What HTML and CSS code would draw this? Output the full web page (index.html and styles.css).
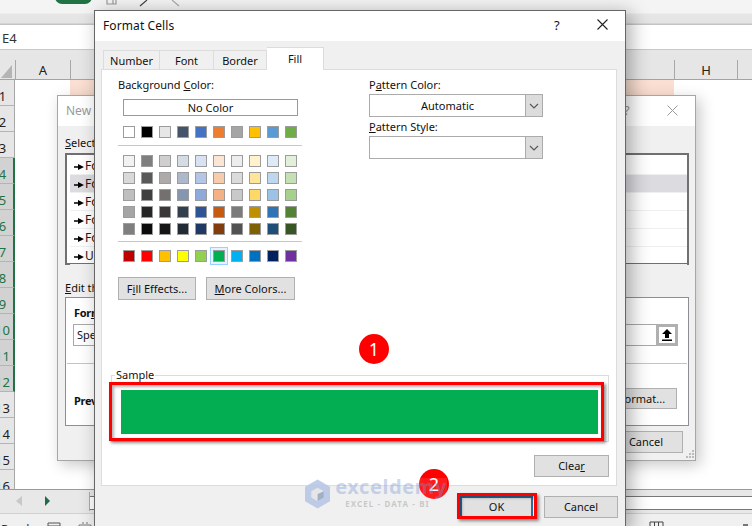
FILE: index.html
```html
<!DOCTYPE html>
<html lang="en">
<head>
<meta charset="utf-8">
<title>Format Cells</title>
<link rel="stylesheet" href="styles.css">
</head>
<body>
<div class="desk">

  <div class="excel">
    <div class="ribbon">
      <span class="rib-text">Measure</span>
      <span class="rib-pill"></span>
      <svg class="rib-icons" width="130" height="8" viewBox="0 0 130 8"><path d="M5 0v4h6V0M8 4h6V0" fill="none" stroke="#9a9a9a" stroke-width="1.2"/><path d="M38 6l7-6" stroke="#444" stroke-width="1.2"/><path d="M70 0l7 6" stroke="#aaa" stroke-width="1.2"/></svg>
    </div>
    <div class="fbar"><span class="namebox">E4</span></div>
    <div class="colhead">
      <div class="corner"><svg width="11" height="13" viewBox="0 0 11 13"><path d="M11 0v13H0z" fill="#b4b4b4"/></svg></div>
      <div class="col col-a">A</div>
      <div class="col col-mid"></div>
      <div class="col col-h">H</div>
      <div class="col col-i"></div>
    </div>
    <div class="sheet">
      <div class="rows">
        <div class="rh"><span>1</span></div>
        <div class="rh"><span>2</span></div>
        <div class="rh"><span>3</span></div>
        <div class="rh sel"><span>4</span></div>
        <div class="rh sel"><span>5</span></div>
        <div class="rh sel"><span>6</span></div>
        <div class="rh sel"><span>7</span></div>
        <div class="rh sel"><span>8</span></div>
        <div class="rh sel"><span>9</span></div>
        <div class="rh sel"><span>10</span></div>
        <div class="rh sel"><span>11</span></div>
        <div class="rh sel"><span>12</span></div>
        <div class="rh"><span>13</span></div>
        <div class="rh"><span>14</span></div>
        <div class="rh"><span>15</span></div>
        <div class="rh"><span>16</span></div>
      </div>
      <div class="cells"><div class="peach"></div></div>
    </div>
    <div class="sheetbar">
      <svg class="nav" width="40" height="11" viewBox="0 0 40 11"><path d="M6 0v10L0 5z" fill="#c8c8c8"/><path d="M29 0v10l5-5z" fill="#1f6b45"/></svg>
      <span class="nav-sep"></span>
      <div class="hscroll"><span class="hscroll-track"></span></div>
    </div>
    <div class="status">
      <span class="status-text">Ready</span>
      <svg class="st-left" width="46" height="6" viewBox="0 0 46 6"><path d="M1 5.500V1h12v4.500M1 4h12" fill="none" stroke="#555"/><path d="M32 5.500V3h12v2.500M35 1h2M39 1h2" fill="none" stroke="#777"/></svg>
      <svg class="st-right" width="100" height="8" viewBox="0 0 100 8"><path d="M1 8V1h13v7M5.500 1v7M9.500 1v7" fill="none" stroke="#444"/><rect x="94" y="3" width="5" height="5" fill="#777"/></svg>
    </div>
  </div>

  <!-- Conditional formatting dialog underneath -->
  <section class="dlg back">
    <header class="back-title"><span>New Formatting Rule</span><span class="back-q">?</span>
      <svg class="back-x" width="11" height="11" viewBox="0 0 11 11"><path d="M.5.500l10 10M10.500.500l-10 10" stroke="#9a9a9a"/></svg>
    </header>
    <div class="back-body">
      <div class="lbl"><u>S</u>elect a Rule Type:</div>
      <div class="listbox">
        <div class="li"><svg class="bul" width="10" height="6" viewBox="0 0 10 6"><path d="M0 2.300h4V0l6 3-6 3V3.700H0z"/></svg>Format all cells based on their values</div>
        <div class="li on"><svg class="bul" width="10" height="6" viewBox="0 0 10 6"><path d="M0 2.300h4V0l6 3-6 3V3.700H0z"/></svg>Format only cells that contain</div>
        <div class="li"><svg class="bul" width="10" height="6" viewBox="0 0 10 6"><path d="M0 2.300h4V0l6 3-6 3V3.700H0z"/></svg>Format only top or bottom ranked values</div>
        <div class="li"><svg class="bul" width="10" height="6" viewBox="0 0 10 6"><path d="M0 2.300h4V0l6 3-6 3V3.700H0z"/></svg>Format only values that are above or below average</div>
        <div class="li"><svg class="bul" width="10" height="6" viewBox="0 0 10 6"><path d="M0 2.300h4V0l6 3-6 3V3.700H0z"/></svg>Format only unique or duplicate values</div>
        <div class="li"><svg class="bul" width="10" height="6" viewBox="0 0 10 6"><path d="M0 2.300h4V0l6 3-6 3V3.700H0z"/></svg>Use a formula to determine which cells to format</div>
      </div>
      <div class="lbl edit-lbl"><u>E</u>dit the Rule Description:</div>
      <div class="rulebox">
        <div class="rule-top">
          <div class="b">For<u>m</u>at values where this formula is true:</div>
          <div class="formula"><span>Specific</span><button class="refbtn"><svg width="10" height="12" viewBox="0 0 10 12"><path d="M5 0l5 5H7v4H3V5H0zM0 10.500h10v1.500H0z"/></svg></button></div>
        </div>
        <div class="rule-bot"><span class="b prev">Preview:</span><button class="btn fmt">Format...</button></div>
      </div>
      <div class="back-actions"><button class="btn back-cancel">Cancel</button></div>
    </div>
    <svg class="grip" width="9" height="9" viewBox="0 0 9 9"><path d="M7 0h2v2H7zM4 3h2v2H4zM7 3h2v2H7zM1 6h2v2H1zM4 6h2v2H4zM7 6h2v2H7z" fill="#bbb"/></svg>
  </section>

  <!-- Format Cells dialog -->
  <section class="dlg front">
    <header class="title"><span>Format Cells</span><span class="q">?</span>
      <svg class="x" width="11" height="11" viewBox="0 0 11 11"><path d="M.5.500l10 10M10.500.500l-10 10" stroke="#222" stroke-width="1.100"/></svg>
    </header>
    <nav class="tabs">
      <span class="tab t1">Number</span><span class="tab t2">Font</span><span class="tab t3">Border</span><span class="tab t4 act">Fill</span>
    </nav>
    <div class="panel">
      <div class="cols">
        <div class="left">
          <div class="lbl">Background <u>C</u>olor:</div>
          <div class="nocolor">No Color</div>
          <div class="pal one">
            <i style="background:#fff"></i><i style="background:#000"></i><i style="background:#e7e6e6"></i><i style="background:#44546a"></i><i style="background:#4472c4"></i><i style="background:#ed7d31"></i><i style="background:#a5a5a5"></i><i style="background:#ffc000"></i><i style="background:#5b9bd5"></i><i style="background:#70ad47"></i>
          </div>
          <hr class="sep">
          <div class="pal five">
            <i style="background:#f2f2f2"></i><i style="background:#7f7f7f"></i><i style="background:#d0cece"></i><i style="background:#d6dce4"></i><i style="background:#d9e2f3"></i><i style="background:#fbe5d5"></i><i style="background:#ededed"></i><i style="background:#fff2cc"></i><i style="background:#deeaf6"></i><i style="background:#e2efd9"></i>
            <i style="background:#d9d9d9"></i><i style="background:#595959"></i><i style="background:#aeaaaa"></i><i style="background:#adb9ca"></i><i style="background:#b4c6e7"></i><i style="background:#f7cbac"></i><i style="background:#dbdbdb"></i><i style="background:#fee599"></i><i style="background:#bdd7ee"></i><i style="background:#c5e0b3"></i>
            <i style="background:#bfbfbf"></i><i style="background:#3f3f3f"></i><i style="background:#757070"></i><i style="background:#8496b0"></i><i style="background:#8eaadb"></i><i style="background:#f4b183"></i><i style="background:#c9c9c9"></i><i style="background:#ffd966"></i><i style="background:#9cc3e5"></i><i style="background:#a8d08d"></i>
            <i style="background:#a5a5a5"></i><i style="background:#262626"></i><i style="background:#3a3838"></i><i style="background:#323f4f"></i><i style="background:#2f5496"></i><i style="background:#c55a11"></i><i style="background:#7b7b7b"></i><i style="background:#bf8f00"></i><i style="background:#2e74b5"></i><i style="background:#538135"></i>
            <i style="background:#7f7f7f"></i><i style="background:#0c0c0c"></i><i style="background:#171616"></i><i style="background:#222a35"></i><i style="background:#1f3864"></i><i style="background:#833c0b"></i><i style="background:#525252"></i><i style="background:#7f6000"></i><i style="background:#1f4e79"></i><i style="background:#385623"></i>
          </div>
          <hr class="sep sep2">
          <div class="pal one">
            <i style="background:#c00000"></i><i style="background:#ff0000"></i><i style="background:#ffc000"></i><i style="background:#ffff00"></i><i style="background:#92d050"></i><i class="picked" style="background:#00b050"></i><i style="background:#00b0f0"></i><i style="background:#0070c0"></i><i style="background:#002060"></i><i style="background:#7030a0"></i>
          </div>
          <div class="fillbtns">
            <button class="btn fe">F<u>i</u>ll Effects...</button>
            <button class="btn mc"><u>M</u>ore Colors...</button>
          </div>
        </div>
        <div class="right">
          <div class="lbl">P<u>a</u>ttern Color:</div>
          <div class="combo"><span class="combo-val">Automatic</span><span class="drop"><svg width="10" height="6" viewBox="0 0 10 6"><path d="M1 1l4 4 4-4" fill="none" stroke="#555" stroke-width="1.100"/></svg></span></div>
          <div class="lbl ps"><u>P</u>attern Style:</div>
          <div class="combo"><span class="combo-val"></span><span class="drop"><svg width="10" height="6" viewBox="0 0 10 6"><path d="M1 1l4 4 4-4" fill="none" stroke="#555" stroke-width="1.100"/></svg></span></div>
        </div>
      </div>
      <fieldset class="sample">
        <legend>Sample</legend>
        <div class="swatch"></div>
      </fieldset>
      <div class="clear-row"><button class="btn clear">Clea<u>r</u></button></div>
    </div>
    <footer class="actions">
      <button class="btn ok">OK</button>
      <button class="btn cancel">Cancel</button>
    </footer>
  </section>

  <!-- Tutorial annotations -->
  <div class="hl hl-sample"></div>
  <div class="hl hl-ok"></div>
  <div class="badge b1">1</div>
  <div class="badge b2">2</div>
  <div class="mark">
    <svg class="mark-logo" width="28" height="32" viewBox="0 0 28 32"><path d="M14 0l14 8v16l-14 8L0 24V8z" fill="#b9c8e6"/><path d="M14 9l7 4v7l-7 4-7-4v-7z" fill="#e6e6e6"/><path d="M14 16l7-3v7l-7 4z" fill="#9aa9c4"/></svg>
    <div class="mark-text"><div class="mark-name">exceldemy</div><div class="mark-sub">EXCEL - DATA - BI</div></div>
  </div>
</div>
</body>
</html>
```
FILE: styles.css
```css
* { box-sizing: border-box; }
html, body { margin: 0; padding: 0; }
body { width: 752px; height: 526px; overflow: hidden; background: #fff; }
.desk { position: relative; width: 752px; height: 526px; overflow: hidden; font: 11px/14px "Noto Sans", sans-serif; color: #111; }
u { text-underline-offset: 1px; }

/* Excel behind */
.excel { display: flex; flex-direction: column; height: 526px; }
.ribbon { position: relative; height: 25px; background: linear-gradient(#f4f4f4 0 13px, #e6e6e6 14px, #e4e4e4 23px, #c4c4c4 24px); overflow: hidden; }
.rib-text { position: absolute; left: 1px; top: -11px; font-size: 12px; color: #333; }
.rib-pill { position: absolute; left: 55px; top: -10px; width: 37px; height: 14px; border-radius: 7px; background: #217346; }
.rib-icons { position: absolute; left: 102px; top: 0; }
.fbar { height: 25px; background: #fff; border-bottom: 1px solid #c8c8c8; padding: 6px 0 0 2px; font-size: 13px; color: #333; }
.namebox { display: block; line-height: 14px; }
.colhead { display: flex; height: 30px; background: #e6e6e6; border-bottom: 1px solid #a4a4a4; font-size: 13px; color: #222; }
.corner { width: 15px; padding: 15px 0 0 1px; line-height: 0; }
.col { border-left: 1px solid #a8a8a8; text-align: center; margin-top: 10px; height: 19px; line-height: 20px; }
.col-a { width: 55px; }
.col-mid { width: 604px; }
.col-h { width: 63px; }
.col-i { flex: 1; }
.sheet { display: flex; height: 409px; overflow: hidden; }
.rows { width: 15px; flex: none; overflow: hidden; }
.rh { height: 26px; width: 15px; background: #e6e6e6; border-bottom: 1px solid #b4b4b4; border-right: 1px solid #a8a8a8; font-size: 13px; line-height: 32px; color: #222; overflow: hidden; }
.rh span { display: block; width: 27px; margin-left: -11px; text-align: center; }
.rh.sel { background: #d2d2d2; border-right: 2px solid #217346; color: #217346; }
.cells { flex: 1; background: #fff; }
.peach { width: 604px; height: 26px; margin-left: 55px; background: #fbdfd2; }
.sheetbar { display: flex; height: 24px; background: #e8e8e8; border-top: 1px solid #9a9a9a; flex: none; }
.nav { margin: 6px 0 0 16px; }
.nav-sep { width: 1px; height: 19px; margin: 2px 0 0 33px; background: #aaa; }
.hscroll { flex: 1; margin: 6px 0 3px; background: #fff; border-top: 1px solid #777; border-bottom: 1px solid #777; }
.hscroll-track { display: block; }
.status { position: relative; flex: 1; background: #f0f0f0; border-top: 1px solid #d0d0d0; overflow: hidden; }
.status-text { position: absolute; left: 1px; top: 9px; font-size: 12px; color: #333; }
.st-left { position: absolute; left: 47px; top: 8px; }
.st-right { position: absolute; left: 649px; top: 7px; }

/* Dialogs: windows on a desktop */
.dlg { position: absolute; background: #f0f0f0; }
.btn { display: block; padding: 0; font: inherit; color: #111; background: #e1e1e1; border: 1.500px solid #b0b0b0; text-align: center; }

/* Back dialog */
.back { left: 57px; top: 95px; width: 639px; height: 366px; border: 1px solid #a6a6a6; box-shadow: 4px 4px 14px rgba(0,0,0,.22); }
.back-title { position: relative; height: 30px; background: #fff; padding: 8px 0 0 8px; color: #999; font-size: 12px; }
.back-q { position: absolute; left: 566px; top: 7px; color: #999; font-size: 13px; }
.back-x { position: absolute; left: 609px; top: 9px; }
.back-body { padding: 9px 6px 0 7px; }
.listbox { height: 112px; margin-top: 3px; padding: 2px 0 0 3px; border: 2px solid #707070; background: #fff; }
.li { height: 18px; padding-left: 4px; line-height: 17px; border-bottom: 1px solid #efefef; white-space: nowrap; font-size: 12px; color: #301010; }
.li.on { background: #dcdce0; }
.bul { margin-right: 1px; }
.edit-lbl { margin-top: 15px; }
.rulebox { height: 129px; margin-top: 2px; border: 1px solid #8e8e96; background: #fff; padding: 0 1px; }
.rule-top { height: 66px; padding: 8px 0 0 7px; border-bottom: 1px solid #c4c4c4; }
.b { font-weight: 700; letter-spacing: -.3px; }
.formula { display: flex; width: 605px; height: 22px; margin: 4px 0 0 -1px; border: 1px solid #a8a8a8; background: #fff; padding-left: 3px; line-height: 20px; justify-content: space-between; font-weight: 400; letter-spacing: 0; }
.refbtn { width: 22px; height: 22px; margin: -1px -1px 0 0; padding: 0; border: 3px solid #b0b0b0; background: #fff; line-height: 0; }
.rule-bot { display: flex; justify-content: space-between; padding: 24px 10px 0 7px; }
.prev { line-height: 22px; margin-top: 2px; }
.fmt { width: 70px; height: 21px; }
.back-actions { display: flex; justify-content: flex-end; margin: 5px 6px 0 0; }
.back-cancel { width: 74px; height: 22px; }
.grip { position: absolute; right: 1px; bottom: 1px; }

/* Front dialog */
.front { left: 94px; top: 10px; width: 532px; height: 520px; border: 1px solid #666; box-shadow: 5px 3px 18px rgba(0,0,0,.32); }
.title { position: relative; height: 30px; background: #fff; padding: 7px 0 0 8px; font-size: 12px; line-height: 15px; letter-spacing: .1px; }
.q { position: absolute; left: 459px; top: 7px; font-size: 13px; }
.x { position: absolute; left: 502px; top: 8px; }
.tabs { display: flex; height: 28px; padding: 9px 0 0 8px; }
.tab { height: 20px; text-align: center; line-height: 19px; border: 1px solid #dcdcdc; border-bottom: 0; border-left: 0; }
.t1 { width: 57px; border-left: 1px solid #dcdcdc; }
.t2 { width: 54px; }
.t3 { width: 53px; }
.tab.act { width: 57px; height: 23px; margin-top: -3px; background: #fff; line-height: 22px; position: relative; z-index: 1; }
.panel { width: 516px; height: 417px; margin-left: 6px; border: 1px solid #dcdcdc; background: #fff; padding: 7px 7px 0 9px; }
.cols { display: flex; height: 291px; }
.left { width: 258px; padding-left: 7px; }
.lbl { line-height: 15px; }
.nocolor { width: 175px; height: 17px; margin: 7px 0 0 5px; border: 1px solid #999; text-align: center; line-height: 15px; }
.pal { display: grid; grid-template-columns: repeat(10, 12px); column-gap: 6px; margin-left: 5px; width: 174px; }
.pal.one { margin-top: 10px; }
.pal.five { row-gap: 5px; margin-top: 9px; }
.pal i { display: block; height: 12px; border: 1px solid #9c9c9c; }
.pal i.picked { box-shadow: 0 0 0 2px #e5f3ff, 0 0 0 3px #99d1ff; }
.sep { height: 1px; width: 184px; margin: 7px 0 0 0; border: 0; background: #c8c8c8; }
.sep2 { margin-top: 6px; }
.sep2 + .pal.one { margin-top: 8px; }
.fillbtns { display: flex; gap: 10px; margin-top: 15px; }
.fe { width: 78px; height: 23px; }
.mc { width: 89px; height: 23px; }
.right { width: 174px; }
.combo { display: flex; height: 23px; margin-top: 2px; border: 1.500px solid #ababab; background: #fff; }
.combo-val { flex: 1; text-align: center; line-height: 22px; }
.drop { width: 17px; background: #dcdcdc; border-left: 1px solid #ababab; display: flex; align-items: center; justify-content: center; }
.ps { margin-top: 2px; }
.sample { width: 498px; height: 74px; margin: 0; padding: 0; border: 1px solid #dcdcdc; }
.sample legend { padding: 0 1px; margin-left: 3px; line-height: 14px; font-size: 11px; }
.swatch { width: 477px; height: 44px; margin: 8px 0 0 9px; background: #03ae52; }
.clear-row { display: flex; justify-content: flex-end; width: 498px; margin-top: 13px; }
.clear { width: 75px; height: 22px; }
.actions { display: flex; align-items: flex-start; padding: 10px 0 0 365px; }
.ok { width: 73px; height: 22px; border: 2px solid #2b6ca3; }
.cancel { width: 74px; height: 22px; margin-left: 11px; }

/* Annotations */
.hl { position: absolute; border: 3px solid #fe0000; box-shadow: 2px 2px 3px rgba(0,0,0,.45), inset 2px 2px 3px rgba(0,0,0,.3); }
.hl-sample { left: 109px; top: 382px; width: 495px; height: 59px; }
.hl-ok { left: 457px; top: 493px; width: 80px; height: 26px; }
.badge { position: absolute; width: 30px; height: 30px; border-radius: 50%; background: #fe0000; color: #fff; text-align: center; font: 18px/30px "Noto Sans", sans-serif; }
.b1 { left: 359px; top: 334px; }
.b2 { left: 419px; top: 469px; }
.mark { position: absolute; left: 305px; top: 478px; width: 142px; height: 32px; display: flex; gap: 5px; background: rgba(255,255,255,.12); opacity: .9; }
.mark-name { font: 700 20px/20px "Noto Sans", sans-serif; color: rgba(120,150,215,.42); letter-spacing: .6px; margin-top: -1px; white-space: nowrap; }
.mark-sub { font: 700 8px/10px "Noto Sans", sans-serif; color: rgba(150,150,150,.5); letter-spacing: 1.100px; margin: 2px 0 0 10px; white-space: nowrap; }
```
